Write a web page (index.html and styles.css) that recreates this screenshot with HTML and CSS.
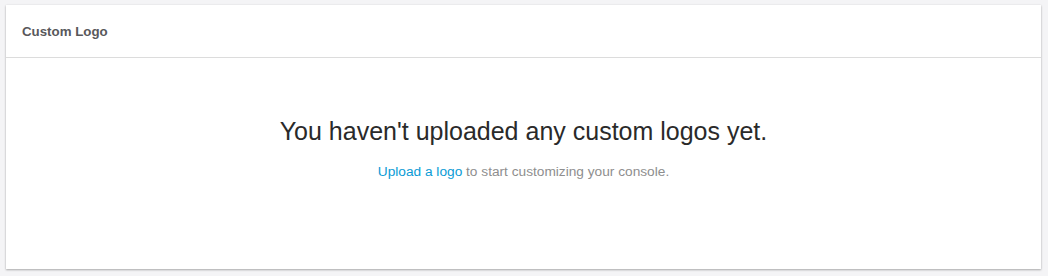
FILE: index.html
```html
<!DOCTYPE html>
<html lang="en">
<head>
    <meta charset="UTF-8">
    <title>Custom Logo</title>
    <link rel="stylesheet" href="styles.css">
</head>
<body>
    <div class="panel">
        <div class="panel-head">Custom Logo</div>
        <div class="panel-body">
            <h2 class="empty-title">You haven't uploaded any custom logos yet.</h2>
            <p class="empty-text"><a href="#" class="upload-link">Upload a logo</a> to start customizing your console.</p>
        </div>
    </div>
</body>
</html>
```

FILE: styles.css
```css
* {
    margin: 0;
    padding: 0;
    box-sizing: border-box;
}
html, body {
    background: #f4f4f6;
}
body {
    padding: 5px 7px 7px 6px;
    font-family: "Liberation Sans", Arial, sans-serif;
}
.panel {
    background: #ffffff;
    height: 264px;
    box-shadow: 0 1px 2px rgba(0, 0, 0, 0.3), 0 0 2px rgba(0, 0, 0, 0.06);
    display: flex;
    flex-direction: column;
}
.panel-head {
    height: 53px;
    padding: 0 16px;
    display: flex;
    align-items: center;
    border-bottom: 1px solid #dcdcdc;
    font-size: 13.3px;
    font-weight: bold;
    color: #58585b;
}
.panel-body {
    flex: 1;
    text-align: center;
    padding-top: 58px;
}
.empty-title {
    font-size: 25px;
    font-weight: normal;
    color: #2a2a2a;
    line-height: 30px;
}
.empty-text {
    margin-top: 18px;
    font-size: 13.7px;
    line-height: 16px;
    color: #8e8e8e;
}
.upload-link {
    color: #0a9bd5;
    text-decoration: none;
}
```
